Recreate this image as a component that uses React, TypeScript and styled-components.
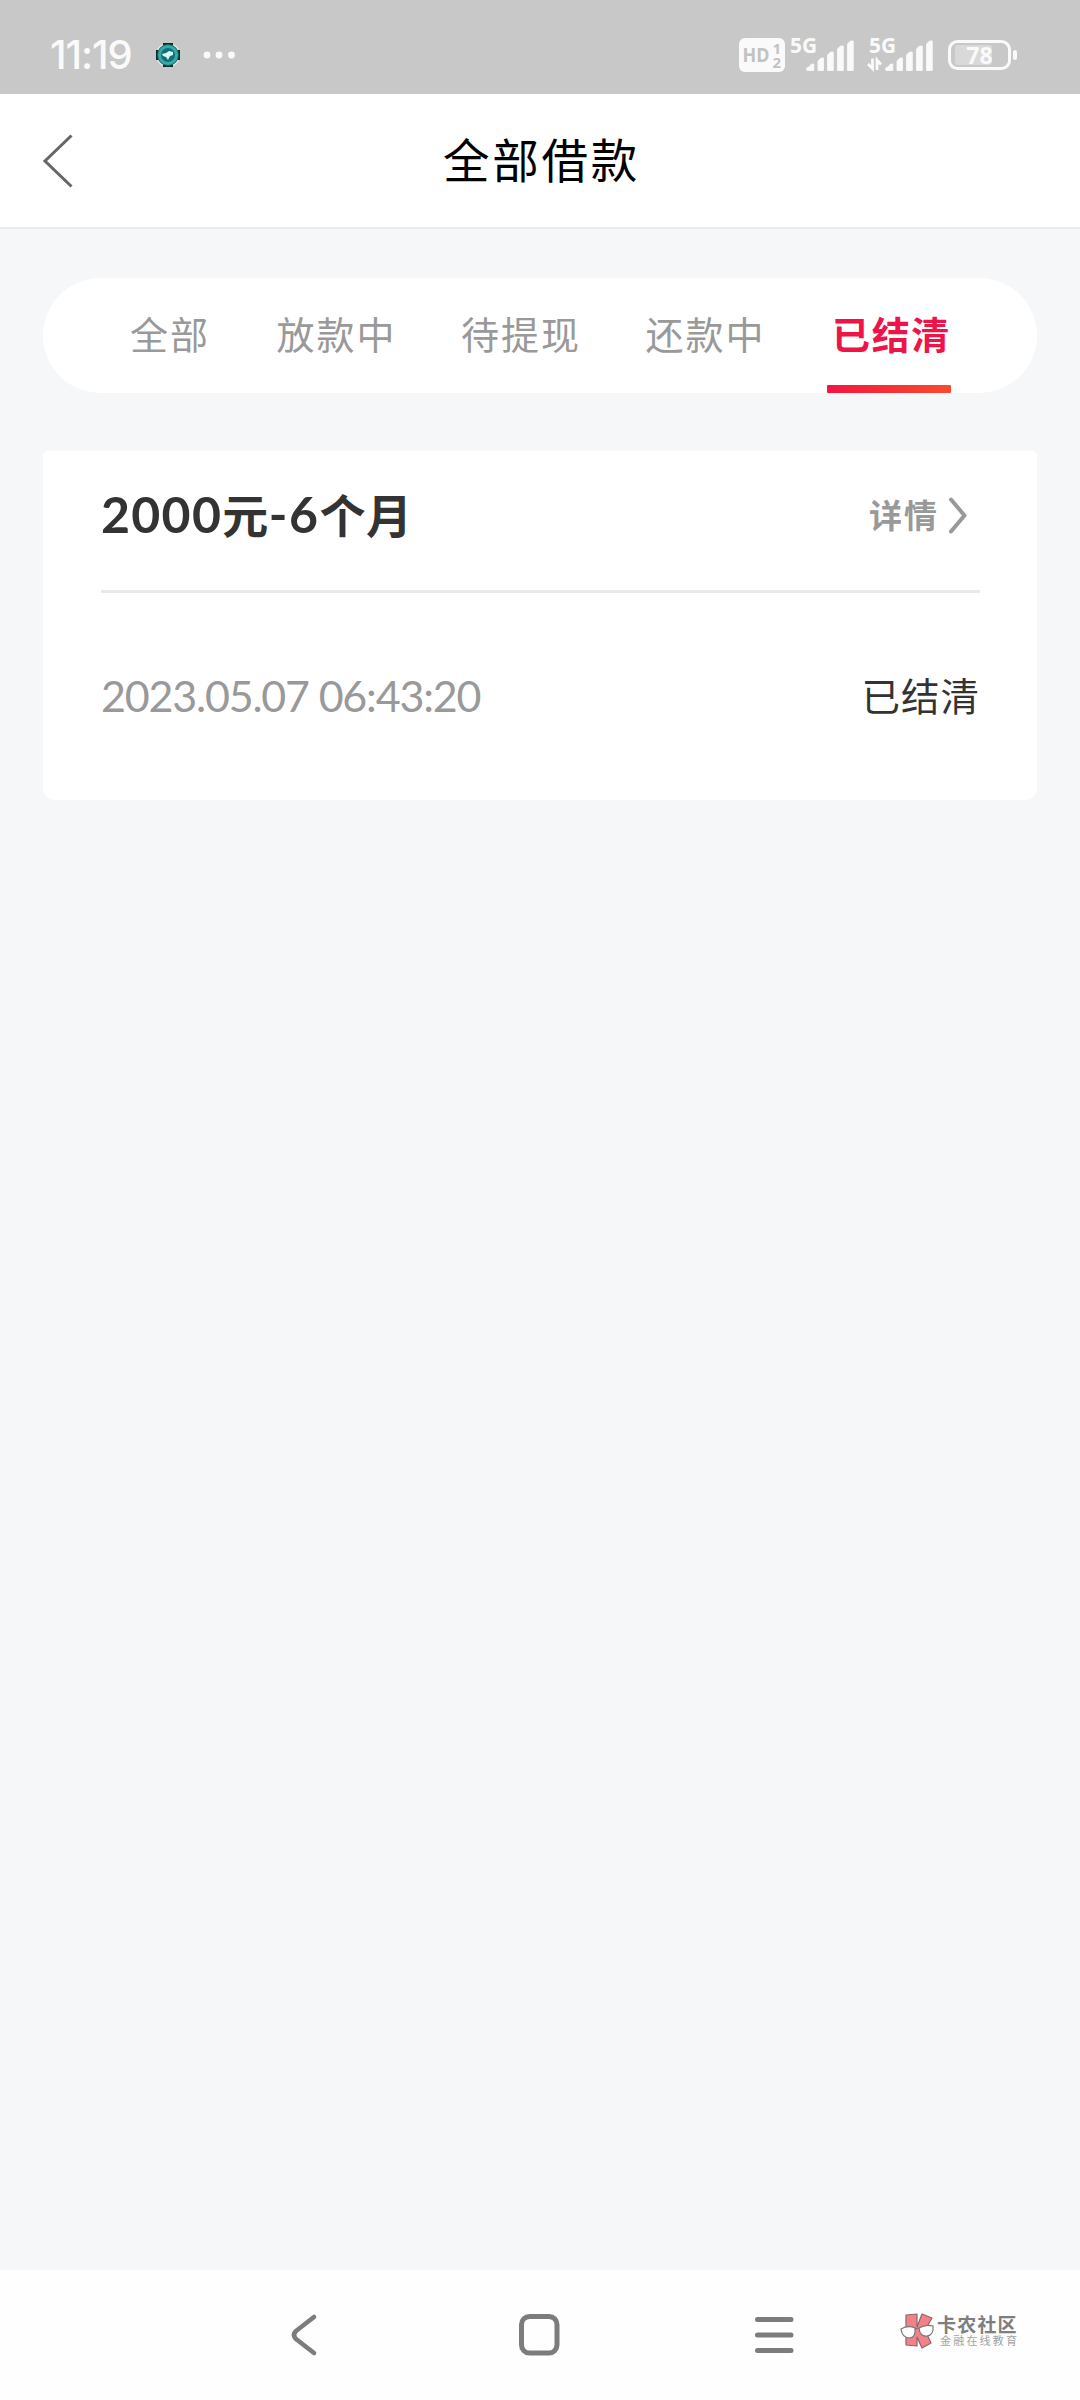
import React from 'react';
import styled, { createGlobalStyle } from 'styled-components';

const CJK = "'Noto Sans CJK SC', sans-serif";

const GlobalStyle = createGlobalStyle`
  * { box-sizing: border-box; }
  body { margin: 0; background: #f6f7f9; font-family: ${CJK}; }
  svg { display: block; flex: none; overflow: visible; }
`;

const Screen = styled.div`
  display: flex;
  flex-direction: column;
  width: 1080px;
  height: 2400px;
  background: #f6f7f9;
  overflow: hidden;
`;

const StatusBar = styled.div`
  display: flex;
  align-items: center;
  height: 94px;
  padding: 15px 62px 0 50px;
  background: #c8c8c8;
`;

const Clock = styled.span`
  width: 106px;
  font: 500 40px/40px Inter, sans-serif;
  letter-spacing: -1.1px;
  color: #fafafa;
  white-space: nowrap;
`;

const Notifications = styled.div`
  display: flex;
  align-items: center;
  gap: 23px;
`;

const StatusIcons = styled.div`
  margin-left: auto;
  display: flex;
  align-items: center;
  gap: 13px;
`;

const NetworkGroup = styled.div`
  display: flex;
  align-items: center;
  gap: 5px;
`;

const Header = styled.header`
  display: grid;
  grid-template-columns: 140px 1fr 140px;
  align-items: center;
  height: 135px;
  background: #fff;
  border-bottom: 2px solid #e8eaec;
`;

const BackButton = styled.button`
  display: flex;
  padding: 0 0 0 42px;
  border: 0;
  background: none;
`;

const Title = styled.h1`
  margin: 0;
  padding: 0 0 5px 3px;
  font-size: 46.500px;
  line-height: 60px;
  font-weight: 400;
  letter-spacing: 2.8px;
  text-align: center;
  color: #000;
`;

const Main = styled.main`
  flex: 1;
  display: flex;
  flex-direction: column;
  gap: 58px;
  padding: 49px 43px 0;
`;

const Tabs = styled.nav`
  display: flex;
  justify-content: space-between;
  height: 115px;
  padding: 0 86px 0 82px;
  border-radius: 58px;
  background: #fff;
`;

const Tab = styled.button<{ $active?: boolean }>`
  display: flex;
  flex-direction: column;
  justify-content: space-between;
  padding: 27px 0 0;
  border: 0;
  background: none;
  font-family: ${CJK};
  font-size: 38px;
  line-height: 56px;
  letter-spacing: ${p => (p.$active ? 1.6 : 2)}px;
  font-weight: ${p => (p.$active ? 700 : 400)};
  color: ${p => (p.$active ? '#ef1447' : '#999')};

  &:nth-child(3),
  &:nth-child(4) {
    margin-left: -2px;
  }
`;

const TabLabel = styled.span`
  padding-left: 5px;
`;

const Underline = styled.span`
  align-self: flex-end;
  width: 124px;
  height: 8px;
  border-radius: 1px;
  background: linear-gradient(90deg, #f5153f, #fb4a2e);
`;

const Card = styled.section`
  height: 349px;
  padding: 0 57px 0 58px;
  border-radius: 5px 5px 12px 12px;
  background: #fff;
`;

const CardHead = styled.div`
  display: flex;
  align-items: center;
  justify-content: space-between;
  height: 142px;
  padding-bottom: 13px;
  border-bottom: 3px solid #e9e9ea;
`;

const LoanName = styled.h2`
  display: flex;
  align-items: baseline;
  margin: 0;
  padding-bottom: 2px;
  font-size: 46px;
  line-height: 60px;
  font-weight: 700;
  letter-spacing: 0.5px;
  color: #333;
  white-space: nowrap;
`;

const Figure = styled.span<{ $spacing: number }>`
  font-family: Lato, sans-serif;
  font-size: 50px;
  letter-spacing: ${p => p.$spacing}px;
`;

const DetailLink = styled.a`
  display: flex;
  align-items: center;
  gap: 10px;
  padding-right: 13px;
  font-size: 33px;
  line-height: 48px;
  font-weight: 700;
  letter-spacing: 2px;
  color: #999;
`;

const CardBody = styled.div`
  display: flex;
  align-items: center;
  justify-content: space-between;
  height: 207px;
`;

const DateText = styled.time`
  padding-bottom: 2px;
  font: 400 43px/60px Lato, sans-serif;
  letter-spacing: -1.2px;
  color: #999;
  white-space: nowrap;
`;

const Status = styled.span`
  padding-bottom: 6px;
  font-size: 38.500px;
  line-height: 60px;
  letter-spacing: 1px;
  color: #333;
`;

const NavBar = styled.footer`
  display: flex;
  align-items: center;
  height: 130px;
  padding-left: 290px;
  background: #fefefe;
`;

const NavButton = styled.button<{ $gap: number }>`
  display: flex;
  margin: 0 ${p => p.$gap}px 0 0;
  padding: 0;
  border: 0;
  background: none;
`;

const Brand = styled.div`
  display: flex;
  align-items: center;
  gap: 3px;
  margin-top: -8px;
`;

const BrandText = styled.div`
  display: flex;
  flex-direction: column;
  padding-bottom: 3px;
  white-space: nowrap;
`;

const BrandName = styled.span`
  font-size: 19px;
  line-height: 21px;
  font-weight: 700;
  letter-spacing: 1.2px;
  color: #7e7e7e;
`;

const BrandTag = styled.span`
  padding-left: 3px;
  font-size: 11px;
  line-height: 13px;
  letter-spacing: 2.2px;
  color: #a2a2a2;
`;

const AppBadge = () => (
  <svg width="24" height="24" viewBox="0 0 24 24">
    <circle cx="12" cy="12" r="12" fill="#e3eeee" />
    <path d="M7 0h10v2.500h-10zM7 21.500h10v2.500h-10zM0 7h2.500v10h-2.500zM21.500 7h2.500v10h-2.500z" fill="#0b2b2b" />
    <circle cx="12" cy="12" r="10.500" fill="#35aaa6" stroke="#17605e" strokeWidth="1" />
    <circle cx="12" cy="12" r="7" fill="#136c78" />
    <path d="M6 11l4-1 3-2 4 1v3l-3 1-2 4-2-3-3-1z" fill="#d5f7f3" />
  </svg>
);

const MoreDots = () => (
  <svg width="32" height="8" viewBox="0 0 32 8">
    {[4, 16, 28.5].map(x => <circle key={x} cx={x} cy="4" r="3.4" fill="#fafafa" />)}
  </svg>
);

const VolteBadge = () => (
  <svg width="46" height="34" viewBox="0 0 46 34">
    <rect width="46" height="34" rx="6" fill="#fafafa" />
    <g fill="#c2c2c2" fontFamily="'Open Sans', sans-serif" fontWeight="700">
      <text x="3.5" y="24" fontSize="19.500" textLength="27" lengthAdjust="spacingAndGlyphs">HD</text>
      <text x="33.5" y="15.5" fontSize="15">1</text>
      <text x="33.5" y="29.5" fontSize="15">2</text>
    </g>
  </svg>
);

const Signal = ({ data }: { data?: boolean }) => (
  <svg width="66" height="48" viewBox="0 -6 66 48">
    <text x="0" y="15.5" fontSize="22" fontFamily="'Open Sans', sans-serif" fontWeight="700" fill="#fafafa" textLength="27" lengthAdjust="spacingAndGlyphs">5G</text>
    <path
      d="M16.800 33.500V31Q19.500 30 21.500 27H23.800V33.500ZM28 33.500V24L31 21H33.500V33.500ZM37.500 33.500V18L40.500 15H43.300V33.500ZM47.500 33.500V12L50.500 9H53.300V33.500ZM57.500 33.500V7L60.500 4H63.300V33.500Z"
      fill="#fafafa" stroke="#fafafa" strokeWidth="0.8" strokeLinejoin="round"
    />
    {data && <path d="M-1 27L3.500 31.500V21.500M8 33V23L12 27.500" fill="none" stroke="#fafafa" strokeWidth="2.800" />}
  </svg>
);

const Battery = () => (
  <svg width="70" height="30" viewBox="0 0 70 30">
    <rect x="1.500" y="1.500" width="60" height="27" rx="8" fill="none" stroke="#fafafa" strokeWidth="3" />
    <rect x="7" y="5" width="37" height="20" rx="3" fill="#d9d9d9" />
    <rect x="65" y="10" width="4" height="10" rx="2" fill="#fafafa" />
    <text x="31.500" y="23.500" fontSize="23" fontFamily="'Open Sans', sans-serif" fontWeight="700" fill="#fafafa" textAnchor="middle">78</text>
  </svg>
);

const BrandMark = () => (
  <svg width="34" height="36" viewBox="0 0 34 36">
    <path d="M6 2L17 1V14L22 1L32 5L25 17L31 30L22 35L17 24V33L6 32Z" fill="#f2828a" stroke="#87686b" strokeWidth="1.200" strokeLinejoin="round" />
    <path d="M1 16Q8 12 15 15Q16 24 10 25Q2 25 1 16ZM19 15Q25 11 33 13Q34 22 27 23Q20 24 19 15ZM15 16L19 15" fill="#fff" stroke="#777" strokeWidth="1.200" />
  </svg>
);

const tabs = ['全部', '放款中', '待提现', '还款中', '已结清'];

export default function App() {
  return (
    <Screen>
      <GlobalStyle />
      <StatusBar>
        <Clock>11:19</Clock>
        <Notifications>
          <AppBadge />
          <MoreDots />
        </Notifications>
        <StatusIcons>
          <NetworkGroup>
            <VolteBadge />
            <Signal />
          </NetworkGroup>
          <Signal data />
          <Battery />
        </StatusIcons>
      </StatusBar>
      <Header>
        <BackButton aria-label="返回">
          <svg width="30" height="52" viewBox="0 0 30 52">
            <path d="M29.500 0.500L3 26L29.500 51.500" fill="none" stroke="#666" strokeWidth="3" />
          </svg>
        </BackButton>
        <Title>全部借款</Title>
      </Header>
      <Main>
        <Tabs>
          {tabs.map((label, i) => (
            <Tab key={label} $active={i === 4}>
              <TabLabel>{label}</TabLabel>
              {i === 4 && <Underline />}
            </Tab>
          ))}
        </Tabs>
        <Card>
          <CardHead>
            <LoanName>
              <Figure $spacing={1.3}>2000</Figure>元<Figure $spacing={1.6}>-6</Figure>个月
            </LoanName>
            <DetailLink>
              详情
              <svg width="18" height="36" viewBox="0 0 18 36">
                <path d="M2 3.500L15.500 19.500L2 35.500" fill="none" stroke="#999" strokeWidth="4" strokeLinecap="round" strokeLinejoin="round" />
              </svg>
            </DetailLink>
          </CardHead>
          <CardBody>
            <DateText>2023.05.07 06:43:20</DateText>
            <Status>已结清</Status>
          </CardBody>
        </Card>
      </Main>
      <NavBar>
        <NavButton $gap={202} aria-label="返回">
          <svg width="27" height="42" viewBox="0 0 27 42">
            <path d="M24 3L6 17Q2 21 6 25L24 39" fill="none" stroke="#7c7c7c" strokeWidth="4.600" strokeLinecap="round" strokeLinejoin="round" />
          </svg>
        </NavButton>
        <NavButton $gap={195} aria-label="主页">
          <svg width="41" height="42" viewBox="0 0 41 42">
            <rect x="2.500" y="2.500" width="35.500" height="36.500" rx="8" fill="none" stroke="#7c7c7c" strokeWidth="5" />
          </svg>
        </NavButton>
        <NavButton $gap={106} aria-label="菜单">
          <svg width="39" height="38" viewBox="0 0 39 38">
            <path d="M2.500 3.500H36M2.500 19H36M2.500 34.500H36" stroke="#7c7c7c" strokeWidth="5" strokeLinecap="round" />
          </svg>
        </NavButton>
        <Brand>
          <BrandMark />
          <BrandText>
            <BrandName>卡农社区</BrandName>
            <BrandTag>金融在线教育</BrandTag>
          </BrandText>
        </Brand>
      </NavBar>
    </Screen>
  );
}
